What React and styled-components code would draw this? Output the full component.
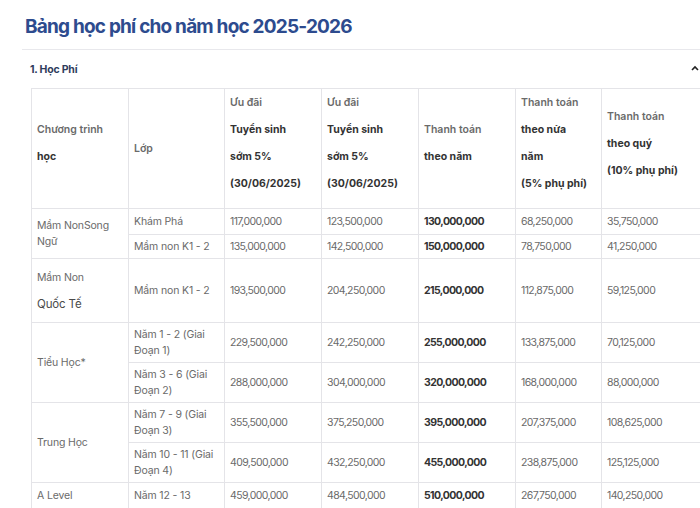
import React from 'react';
import styled, { createGlobalStyle } from 'styled-components';

const GlobalStyle = createGlobalStyle`
  html, body {
    margin: 0;
    padding: 0;
    background: #fff;
    overflow: hidden;
  }
  body {
    font-family: Inter, "Noto Sans", sans-serif;
  }
`;

const Page = styled.div`
  width: 700px;
  height: 508px;
  overflow: hidden;
  padding: 14px 0 0 22px;
  box-sizing: border-box;
`;

const Title = styled.h1`
  margin: 0 0 0 3px;
  font-size: 19px;
  line-height: 26px;
  font-weight: 700;
  letter-spacing: -0.8px;
  color: #2d4b8e;
`;

const Section = styled.div`
  margin-top: 9px;
  border-top: 1px solid #e8e8ec;
`;

const SectionHead = styled.div`
  display: flex;
  align-items: center;
  justify-content: space-between;
  height: 38px;
  padding: 0 0 0 8px;
  font-size: 10.5px;
  font-weight: 700;
  letter-spacing: -0.2px;
  color: #2f3c5c;
`;

const Chevron = styled.svg`
  width: 8px;
  height: 6px;
  margin-right: 1px;
  margin-top: -3px;
`;

const Table = styled.table`
  margin-left: 9px;
  border-collapse: collapse;
  table-layout: fixed;
  width: 680px;
  font-size: 10.5px;
  color: #6a6a6a;
`;

const Th = styled.th`
  border: 1px solid #e4e4e8;
  padding: 0 5px;
  text-align: left;
  vertical-align: middle;
  font-weight: 600;
  color: #6a6a6a;
  height: 117px;
  white-space: nowrap;
`;

const HeadLines = styled.div`
  line-height: 27px;
  margin-bottom: 11px;
`;

const Strong = styled.span`
  display: block;
  font-weight: 700;
  color: #333;
`;

const Muted = styled.span`
  display: block;
`;

const Row = styled.tr`
  height: ${(p) => p.$h}px;
`;

const Td = styled.td`
  border: 1px solid #e4e4e8;
  padding: 2px 5px;
  line-height: 16px;
  vertical-align: middle;
  letter-spacing: ${(p) => (p.$num ? '-0.6px' : '-0.15px')};
  font-weight: ${(p) => (p.$bold ? 700 : 400)};
  color: ${(p) => (p.$bold ? '#333' : '#6a6a6a')};
`;

const TallLines = styled.div`
  line-height: 26px;
`;

const Big = styled.span`
  display: block;
  font-size: 11.5px;
  color: #4a4a4a;
`;

const widths = [97, 96, 97, 97, 97, 86, 110];

const heads = [
  { muted: 'Chương trình', strong: ['học'] },
  { plain: 'Lớp' },
  { muted: 'Ưu đãi', strong: ['Tuyển sinh', 'sớm 5%', '(30/06/2025)'] },
  { muted: 'Ưu đãi', strong: ['Tuyển sinh', 'sớm 5%', '(30/06/2025)'] },
  { muted: 'Thanh toán', strong: ['theo năm'] },
  { muted: 'Thanh toán', strong: ['theo nửa', 'năm', '(5% phụ phí)'] },
  { muted: 'Thanh toán', strong: ['theo quý', '(10% phụ phí)'] },
];

const rows = [
  { h: 26, prog: 'Mầm NonSong Ngữ', span: 2, cls: 'Khám Phá', v: ['117,000,000', '123,500,000', '130,000,000', '68,250,000', '35,750,000'] },
  { h: 24, cls: 'Mầm non K1 - 2', v: ['135,000,000', '142,500,000', '150,000,000', '78,750,000', '41,250,000'] },
  { h: 64, prog: 'intl', span: 1, cls: 'Mầm non K1 - 2', v: ['193,500,000', '204,250,000', '215,000,000', '112,875,000', '59,125,000'] },
  { h: 40, prog: 'Tiểu Học*', span: 2, cls: 'Năm 1 - 2 (Giai Đoạn 1)', v: ['229,500,000', '242,250,000', '255,000,000', '133,875,000', '70,125,000'] },
  { h: 40, cls: 'Năm 3 - 6 (Giai Đoạn 2)', v: ['288,000,000', '304,000,000', '320,000,000', '168,000,000', '88,000,000'] },
  { h: 40, prog: 'Trung Học', span: 2, cls: 'Năm 7 - 9 (Giai Đoạn 3)', v: ['355,500,000', '375,250,000', '395,000,000', '207,375,000', '108,625,000'] },
  { h: 40, cls: 'Năm 10 - 11 (Giai Đoạn 4)', v: ['409,500,000', '432,250,000', '455,000,000', '238,875,000', '125,125,000'] },
  { h: 26, prog: 'A Level', span: 1, cls: 'Năm 12 - 13', v: ['459,000,000', '484,500,000', '510,000,000', '267,750,000', '140,250,000'] },
];

const Program = ({ prog }) =>
  prog === 'intl' ? (
    <TallLines>
      <Muted>Mầm Non</Muted>
      <Big>Quốc Tế</Big>
    </TallLines>
  ) : (
    prog
  );

export default function App() {
  return (
    <>
      <GlobalStyle />
      <Page>
        <Title>Bảng học phí cho năm học 2025-2026</Title>
        <Section>
          <SectionHead>
            <span>1. Học Phí</span>
            <Chevron viewBox="0 0 8 6">
              <path d="M1 5 4 2 7 5" fill="none" stroke="#222" strokeWidth="1.6" />
            </Chevron>
          </SectionHead>
          <Table>
            <colgroup>
              {widths.map((w, i) => (
                <col key={i} style={{ width: w }} />
              ))}
            </colgroup>
            <thead>
              <tr>
                {heads.map((h, i) => (
                  <Th key={i}>
                    {h.plain ? (
                      h.plain
                    ) : (
                      <HeadLines>
                        <Muted>{h.muted}</Muted>
                        {h.strong.map((s) => (
                          <Strong key={s}>{s}</Strong>
                        ))}
                      </HeadLines>
                    )}
                  </Th>
                ))}
              </tr>
            </thead>
            <tbody>
              {rows.map((r, i) => (
                <Row key={i} $h={r.h}>
                  {r.prog && (
                    <Td rowSpan={r.span}>
                      <Program prog={r.prog} />
                    </Td>
                  )}
                  <Td>{r.cls}</Td>
                  {r.v.map((v, j) => (
                    <Td key={j} $num $bold={j === 2}>
                      {v}
                    </Td>
                  ))}
                </Row>
              ))}
            </tbody>
          </Table>
        </Section>
      </Page>
    </>
  );
}
